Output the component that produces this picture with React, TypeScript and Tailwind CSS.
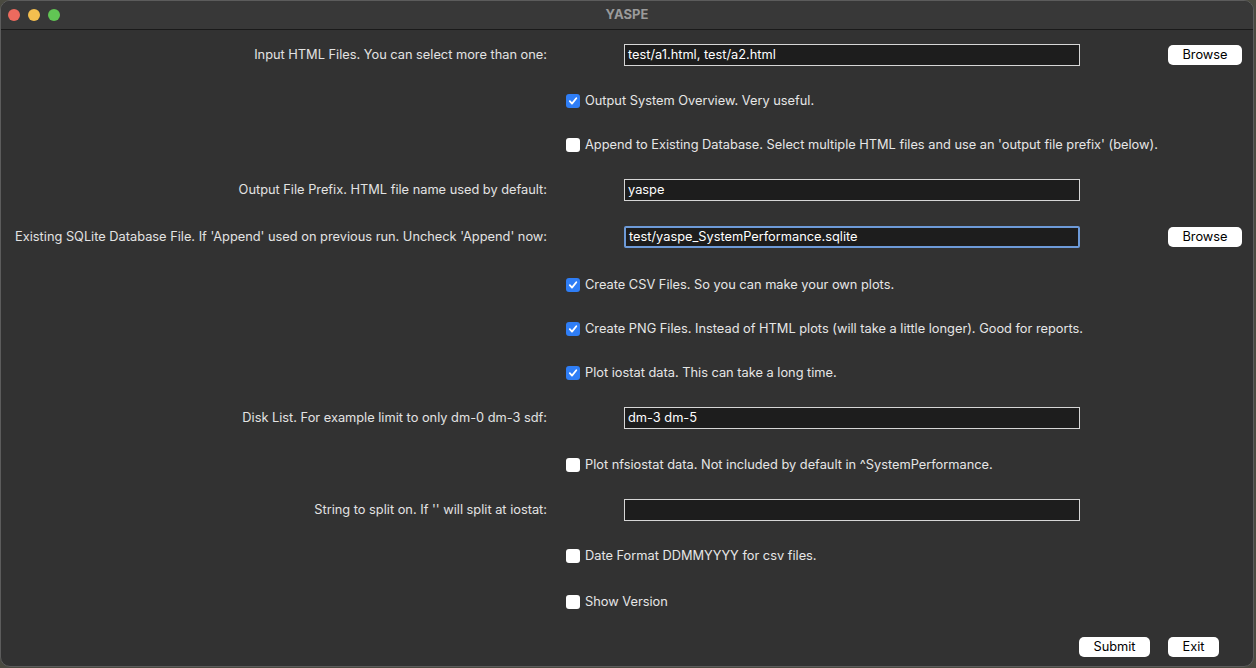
import type { ReactNode } from "react";

const FONT = { fontFamily: 'Inter, "Liberation Sans", Arial, sans-serif' };

/** Text input row: right-aligned label, dark field, optional Browse button. */
const InputRow = ({
  h,
  label,
  value,
  focused,
  browse,
}: {
  h: string;
  label: string;
  value: string;
  focused?: boolean;
  browse?: boolean;
}) => (
  <div className={`flex items-center ${h}`}>
    <div className="w-[546px] shrink-0 text-right text-[12.8px] text-[#e3e3e3]">{label}</div>
    <div
      className={`ml-[77px] w-[456px] h-[22px] shrink-0 flex items-center px-[3px] bg-[#1d1d1d] text-[12.8px] text-white ${
        focused ? "border-2 border-[#6d9ad8] rounded-[2px]" : "border border-[#d6d6d6]"
      }`}
    >
      {value}
    </div>
    {browse && <Btn className="ml-[88px] w-[74px]">Browse</Btn>}
  </div>
);

const Btn = ({ className, children }: { className: string; children: ReactNode }) => (
  <button className={`h-[20px] rounded-[5px] bg-white text-[12.8px] text-black leading-none ${className}`}>
    {children}
  </button>
);

const CheckRow = ({ h, checked, label }: { h: string; checked?: boolean; label: string }) => (
  <div className={`flex items-center ${h}`}>
    <div className="w-[565px] shrink-0" />
    {checked ? (
      <span className="w-[14px] h-[14px] rounded-[3px] bg-[#2f7ef6] flex items-center justify-center">
        <svg width="10" height="10" viewBox="0 0 10 10" fill="none">
          <path d="M1.8 5.2 L4 7.6 L8.3 2.2" stroke="white" strokeWidth="1.8" strokeLinecap="round" strokeLinejoin="round" />
        </svg>
      </span>
    ) : (
      <span className="w-[14px] h-[14px] rounded-[3px] bg-white" />
    )}
    <span className="ml-[5px] text-[12.8px] text-[#e6e6e6]">{label}</span>
  </div>
);

export default function App() {
  return (
    <div className="w-[1256px] h-[668px] bg-[#4a4a40]" style={FONT}>
      <div className="w-[1254px] h-[667px] rounded-[10px] border border-[#5c5c5c] overflow-hidden bg-[#323232] flex flex-col">
        {/* title bar */}
        <div className="h-[29px] shrink-0 bg-[#383838] border-b border-[#1a1a1a] flex items-center relative">
          <div className="flex gap-[8px] ml-[7px]">
            <span className="w-[12px] h-[12px] rounded-full bg-[#ec6a5e]" />
            <span className="w-[12px] h-[12px] rounded-full bg-[#f4bf4f]" />
            <span className="w-[12px] h-[12px] rounded-full bg-[#61c554]" />
          </div>
          <div className="absolute left-0 right-0 text-center text-[13px] font-bold text-[#9b9b9b] pointer-events-none">
            YASPE
          </div>
        </div>

        <div className="pt-[2px]">
          <InputRow h="h-[46px]" label="Input HTML Files. You can select more than one:" value="test/a1.html, test/a2.html" browse />
          <CheckRow h="h-[45px]" checked label="Output System Overview. Very useful." />
          <CheckRow
            h="h-[44px]"
            label="Append to Existing Database. Select multiple HTML files and use an 'output file prefix' (below)."
          />
          <InputRow h="h-[46px]" label="Output File Prefix. HTML file name used by default:" value="yaspe" />
          <InputRow
            h="h-[48px]"
            label="Existing SQLite Database File. If 'Append' used on previous run. Uncheck 'Append' now:"
            value="test/yaspe_SystemPerformance.sqlite"
            focused
            browse
          />
          <CheckRow h="h-[47px]" checked label="Create CSV Files. So you can make your own plots." />
          <CheckRow
            h="h-[42px]"
            checked
            label="Create PNG Files. Instead of HTML plots (will take a little longer). Good for reports."
          />
          <CheckRow h="h-[45px]" checked label="Plot iostat data. This can take a long time." />
          <InputRow h="h-[46px]" label="Disk List. For example limit to only dm-0 dm-3 sdf:" value="dm-3 dm-5" />
          <CheckRow h="h-[47px]" label="Plot nfsiostat data. Not included by default in ^SystemPerformance." />
          <InputRow h="h-[44px]" label="String to split on. If '' will split at iostat:" value="" />
          <CheckRow h="h-[48px]" label="Date Format DDMMYYYY for csv files." />
          <CheckRow h="h-[43px]" label="Show Version" />
          <div className="flex items-center h-[48px]">
            <Btn className="ml-[1078px] w-[71px]">Submit</Btn>
            <Btn className="ml-[18px] w-[51px]">Exit</Btn>
          </div>
        </div>
      </div>
    </div>
  );
}
